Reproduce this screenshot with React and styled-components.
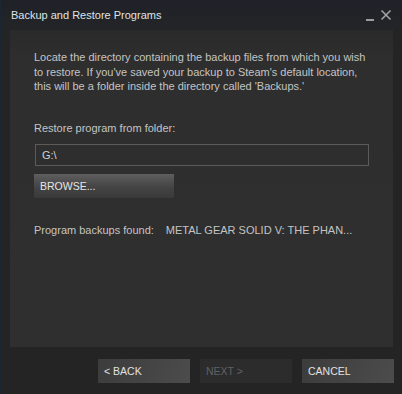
import React from 'react'
import styled, { createGlobalStyle } from 'styled-components'

const GlobalStyle = createGlobalStyle`
	* { box-sizing: border-box; }
	body {
		margin: 0;
		background: #242424;
		font-family: 'Liberation Sans', Arial, sans-serif;
	}
`

const Window = styled.div`
	width: 402px;
	height: 394px;
	display: flex;
	flex-direction: column;
	background: linear-gradient(180deg, #1e2127 0px, #232427 24px, #242424 48px);
	border-left: 1px solid #1b2634;
	border-right: 1px solid #1f2229;
`

const TitleBar = styled.div`
	height: 30px;
	display: flex;
	align-items: center;
	padding: 0 8px 0 10px;
	color: #dfe3e6;
	font-size: 11px;
`

const Title = styled.div`
	flex: 1;
`

const WinButton = styled.div`
	width: 14px;
	height: 14px;
	display: flex;
	align-items: center;
	justify-content: center;
	margin-left: ${(p) => p.gap || 0}px;
`

const Panel = styled.div`
	margin: 0 8px 0 9px;
	height: 317px;
	background: linear-gradient(180deg, #2a2a2b 0px, #2e2e2e 30px, #2f2f2f 100%);
	padding: 20px 24px 0 24px;
	display: flex;
	flex-direction: column;
	color: #c4c4c4;
	font-size: 11px;
`

const Intro = styled.p`
	margin: 0;
	line-height: 14.5px;
	white-space: nowrap;
`

const Label = styled.div`
	margin-top: ${(p) => p.top}px;
	line-height: 14px;
`

const PathInput = styled.div`
	margin-top: 9px;
	margin-left: 1px;
	width: 334px;
	height: 22px;
	border: 1px solid #5b5b5b;
	display: flex;
	align-items: center;
	padding-left: 6px;
	color: #d2d2d2;
`

const Browse = styled.div`
	margin-top: 8px;
	width: 140px;
	height: 24px;
	display: flex;
	align-items: center;
	padding-left: 6px;
	color: #e6e6e6;
	font-size: 10.5px;
	background: linear-gradient(180deg, #5e5e5e 0%, #444 55%, #393939 100%);
`

const FoundRow = styled.div`
	margin-top: 25px;
	display: flex;
	line-height: 14px;
`

const FoundName = styled.span`
	margin-left: 12px;
`

const Footer = styled.div`
	flex: 1;
	display: flex;
	justify-content: flex-end;
	align-items: flex-start;
	gap: 10px;
	padding: 12px 7px 0 0;
`

const FooterButton = styled.div`
	width: 92px;
	height: 24px;
	display: flex;
	align-items: center;
	padding-left: 6px;
	font-size: 10.5px;
	color: ${(p) => (p.disabled ? '#5f6266' : '#e2e2e2')};
	background: ${(p) =>
		p.disabled
			? '#2c2c2c'
			: 'linear-gradient(110deg, #3c3c3c 0%, #444 50%, #4c4c4c 100%)'};
`

export default function App() {
	return (
		<>
			<GlobalStyle />
			<Window>
				<TitleBar>
					<Title>Backup and Restore Programs</Title>
					<WinButton>
						<svg width='10' height='14' viewBox='0 0 10 14'>
							<rect x='1' y='11' width='8' height='2' fill='#9a9ca0' />
						</svg>
					</WinButton>
					<WinButton gap={2}>
						<svg width='12' height='12' viewBox='0 0 12 12'>
							<path d='M1.5 1.5 L10.5 10.5 M10.5 1.5 L1.5 10.5' stroke='#a4a6aa' strokeWidth='1.5' />
						</svg>
					</WinButton>
				</TitleBar>
				<Panel>
					<Intro>
						Locate the directory containing the backup files from which you wish
						<br />
						to restore. If you've saved your backup to Steam's default location,
						<br />
						this will be a folder inside the directory called 'Backups.'
					</Intro>
					<Label top={27}>Restore program from folder:</Label>
					<PathInput>G:\</PathInput>
					<Browse>BROWSE...</Browse>
					<FoundRow>
						<span>Program backups found:</span>
						<FoundName>METAL GEAR SOLID V: THE PHAN...</FoundName>
					</FoundRow>
				</Panel>
				<Footer>
					<FooterButton>&lt; BACK</FooterButton>
					<FooterButton disabled>NEXT &gt;</FooterButton>
					<FooterButton>CANCEL</FooterButton>
				</Footer>
			</Window>
		</>
	)
}
